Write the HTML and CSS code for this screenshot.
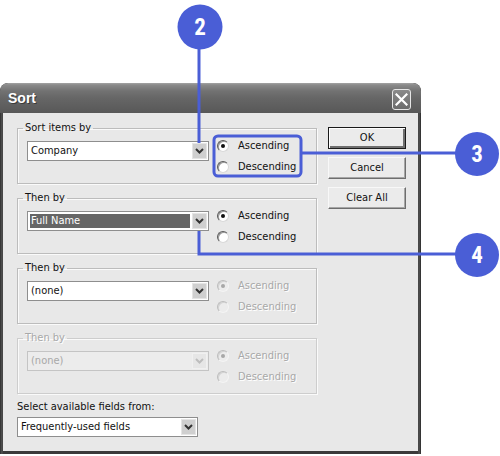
FILE: index.html
```html
<!DOCTYPE html>
<html>
<head>
<meta charset="utf-8">
<link rel="stylesheet" href="styles.css">
</head>
<body>
<div class="stage">
  <div class="dialog">
    <div class="titlebar">
      <span class="title">Sort</span>
      <span class="close"><svg width="13" height="13" viewBox="0 0 13 13"><path d="M1.5 1.5 L11.5 11.5 M11.5 1.5 L1.5 11.5" stroke="#fff" stroke-width="2.2" stroke-linecap="square"/></svg></span>
    </div>
    <div class="client">
      <div class="main">
        <div class="groups">
          <fieldset class="group">
            <legend>Sort items by</legend>
            <div class="row">
              <div class="combo"><span class="value">Company</span><span class="drop"><svg width="9" height="6" viewBox="0 0 9 6"><path d="M1 1 L4.5 4.5 L8 1" fill="none" stroke="#333" stroke-width="2"/></svg></span></div>
              <div class="radios">
                <div class="radio"><span class="dot on"></span>Ascending</div>
                <div class="radio"><span class="dot"></span>Descending</div>
              </div>
            </div>
          </fieldset>
          <fieldset class="group">
            <legend>Then by</legend>
            <div class="row">
              <div class="combo"><span class="value sel">Full Name</span><span class="drop"><svg width="9" height="6" viewBox="0 0 9 6"><path d="M1 1 L4.5 4.5 L8 1" fill="none" stroke="#333" stroke-width="2"/></svg></span></div>
              <div class="radios">
                <div class="radio"><span class="dot on"></span>Ascending</div>
                <div class="radio"><span class="dot"></span>Descending</div>
              </div>
            </div>
          </fieldset>
          <fieldset class="group">
            <legend>Then by</legend>
            <div class="row">
              <div class="combo"><span class="value">(none)</span><span class="drop"><svg width="9" height="6" viewBox="0 0 9 6"><path d="M1 1 L4.5 4.5 L8 1" fill="none" stroke="#333" stroke-width="2"/></svg></span></div>
              <div class="radios off">
                <div class="radio"><span class="dot on"></span>Ascending</div>
                <div class="radio"><span class="dot"></span>Descending</div>
              </div>
            </div>
          </fieldset>
          <fieldset class="group disabled">
            <legend>Then by</legend>
            <div class="row">
              <div class="combo"><span class="value">(none)</span><span class="drop"><svg width="9" height="6" viewBox="0 0 9 6"><path d="M1 1 L4.5 4.5 L8 1" fill="none" stroke="#bdbdbd" stroke-width="2"/></svg></span></div>
              <div class="radios off">
                <div class="radio"><span class="dot on"></span>Ascending</div>
                <div class="radio"><span class="dot"></span>Descending</div>
              </div>
            </div>
          </fieldset>
        </div>
        <div class="buttons">
          <div class="btn default">OK</div>
          <div class="btn">Cancel</div>
          <div class="btn">Clear All</div>
        </div>
      </div>
      <div class="fields-label">Select available fields from:</div>
      <div class="combo fields"><span class="value">Frequently-used fields</span><span class="drop"><svg width="9" height="6" viewBox="0 0 9 6"><path d="M1 1 L4.5 4.5 L8 1" fill="none" stroke="#333" stroke-width="2"/></svg></span></div>
    </div>
  </div>
  <svg class="callouts" width="500" height="456" viewBox="0 0 500 456">
    <g stroke="#4a5ed6" stroke-width="3" fill="none">
      <line x1="199" y1="40" x2="199" y2="143"/>
      <rect x="214" y="136" width="87" height="40" rx="4"/>
      <line x1="301" y1="153" x2="462" y2="153"/>
      <polyline points="199,231 199,254 462,254"/>
    </g>
    <g fill="#4a5ed6">
      <circle cx="200" cy="27" r="22.5"/>
      <circle cx="477" cy="154" r="22"/>
      <circle cx="477" cy="255" r="22"/>
    </g>
    <g class="num" fill="#fff" text-anchor="middle">
      <text x="200" y="35">2</text>
      <text x="477" y="162">3</text>
      <text x="477" y="263">4</text>
    </g>
  </svg>
</div>
</body>
</html>
```
FILE: styles.css
```css
html, body {
  margin: 0;
  padding: 0;
  background: #fff;
}
.stage {
  position: relative;
  width: 500px;
  height: 456px;
  overflow: hidden;
  font-family: "DejaVu Sans", "Liberation Sans", sans-serif;
  font-stretch: condensed;
  font-size: 11px;
  color: #111;
}
.dialog {
  margin-top: 83px;
  width: 421px;
  box-sizing: border-box;
  padding: 0 3px 3px;
  background: #3a3a3a;
  border-radius: 8px 8px 0 0;
  overflow: hidden;
  background-image: linear-gradient(90deg, #2e2e2e 0, #555 2px, #3a3a3a 3px, #3a3a3a 418px, #555 419px, #2a2a2a 421px);
}
.titlebar {
  height: 30px;
  margin: 0 -3px;
  padding: 0 10px 0 8px;
  display: flex;
  justify-content: space-between;
  align-items: center;
  background: linear-gradient(#a4a4a4 0, #8a8a8a 2px, #727272 8px, #666 50%, #585858 100%);
  border-radius: 8px 8px 0 0;
}
.title {
  font-family: "Liberation Sans", sans-serif;
  font-stretch: normal;
  font-weight: bold;
  font-size: 14px;
  color: #fff;
  text-shadow: 1px 1px 0 #3a3a3a;
}
.close {
  align-self: flex-start;
  margin-top: 6px;
  width: 19px;
  height: 21px;
  box-sizing: border-box;
  border: 1px solid #e6e6e6;
  border-radius: 3px;
  background: linear-gradient(#8a8a8a, #6c6c6c);
  display: flex;
  align-items: center;
  justify-content: center;
}
.client {
  background: #e8e8e8;
  height: 338px;
  box-sizing: border-box;
  padding: 8px 0 0 14px;
}
.main {
  display: grid;
  grid-template-columns: 300px 78px;
  column-gap: 11px;
  align-items: start;
}
.groups {
  display: flex;
  flex-direction: column;
  gap: 7px;
}
.group {
  margin: 0;
  width: 300px;
  height: 63px;
  box-sizing: border-box;
  padding: 0 8px 0 9px;
  border: 1px solid #bcbcbc;
  box-shadow: 1px 1px 0 #fafafa, inset 1px 1px 0 #fafafa;
  min-inline-size: 0;
}
.group legend {
  padding: 0 2px;
  margin-left: -4px;
  line-height: 14px;
  color: #111;
}
.row {
  display: flex;
  align-items: flex-start;
}
.combo {
  margin-top: 6px;
  width: 182px;
  height: 20px;
  box-sizing: border-box;
  border: 1px solid #8e8e8e;
  background: #fff;
  display: flex;
  align-items: stretch;
}
.value {
  flex: 1;
  padding-left: 3px;
  line-height: 18px;
  white-space: nowrap;
  overflow: hidden;
}
.value.sel {
  margin: 2px 1px 2px 2px;
  padding-left: 1px;
  line-height: 14px;
  background: #666;
  color: #fff;
}
.drop {
  width: 15px;
  margin: 1px;
  background: #cfcfcf;
  border: 1px solid #e4e4e4;
  box-sizing: border-box;
  display: flex;
  align-items: center;
  justify-content: center;
}
.radios {
  margin-left: 8px;
  display: flex;
  flex-direction: column;
}
.radio {
  height: 21px;
  display: flex;
  align-items: center;
  gap: 9px;
}
.dot {
  width: 12px;
  height: 12px;
  box-sizing: border-box;
  border-radius: 50%;
  border: 1px solid #d8d8d8;
  border-top-color: #5a5a5a;
  border-left-color: #5a5a5a;
  background: #fff;
  box-shadow: inset 1px 1px 0 #9a9a9a;
  display: flex;
  align-items: center;
  justify-content: center;
}
.dot.on::after {
  content: "";
  width: 4px;
  height: 4px;
  border-radius: 50%;
  background: #111;
}
.radios.off .radio {
  color: #a8a8a8;
  text-shadow: 1px 1px 0 #fff;
}
.radios.off .dot {
  border-color: #bdbdbd #f4f4f4 #f4f4f4 #bdbdbd;
  box-shadow: inset 1px 1px 0 #d4d4d4;
  background: #ececec;
}
.radios.off .dot.on::after {
  background: #a8a8a8;
}
.group.disabled {
  border-color: #cdcdcd;
}
.group.disabled legend {
  color: #a8a8a8;
  text-shadow: 1px 1px 0 #fff;
}
.group.disabled .combo {
  background: #ececec;
  border-color: #c4c4c4;
}
.group.disabled .value {
  color: #a8a8a8;
}
.group.disabled .drop {
  background: #e6e6e6;
  border-color: #f0f0f0;
}
.buttons {
  padding-top: 6px;
  display: flex;
  flex-direction: column;
  gap: 8px;
}
.btn {
  height: 22px;
  box-sizing: border-box;
  border: 1px solid;
  border-color: #f8f8f8 #6e6e6e #6e6e6e #f8f8f8;
  box-shadow: inset -1px -1px 0 #a6a6a6;
  background: #ebebeb;
  text-align: center;
  line-height: 19px;
}
.btn.default {
  border: 1px solid #1a1a1a;
  box-shadow: inset 1px 1px 0 #fff, inset -2px -2px 0 #6e6e6e;
}
.fields-label {
  margin-top: 6px;
  line-height: 14px;
}
.combo.fields {
  margin-top: 3px;
  width: 181px;
}
.callouts {
  position: absolute;
  left: 0;
  top: 0;
  pointer-events: none;
}
.num text {
  font-family: Roboto, "Liberation Sans", sans-serif;
  font-weight: 700;
  font-size: 23px;
}
```
